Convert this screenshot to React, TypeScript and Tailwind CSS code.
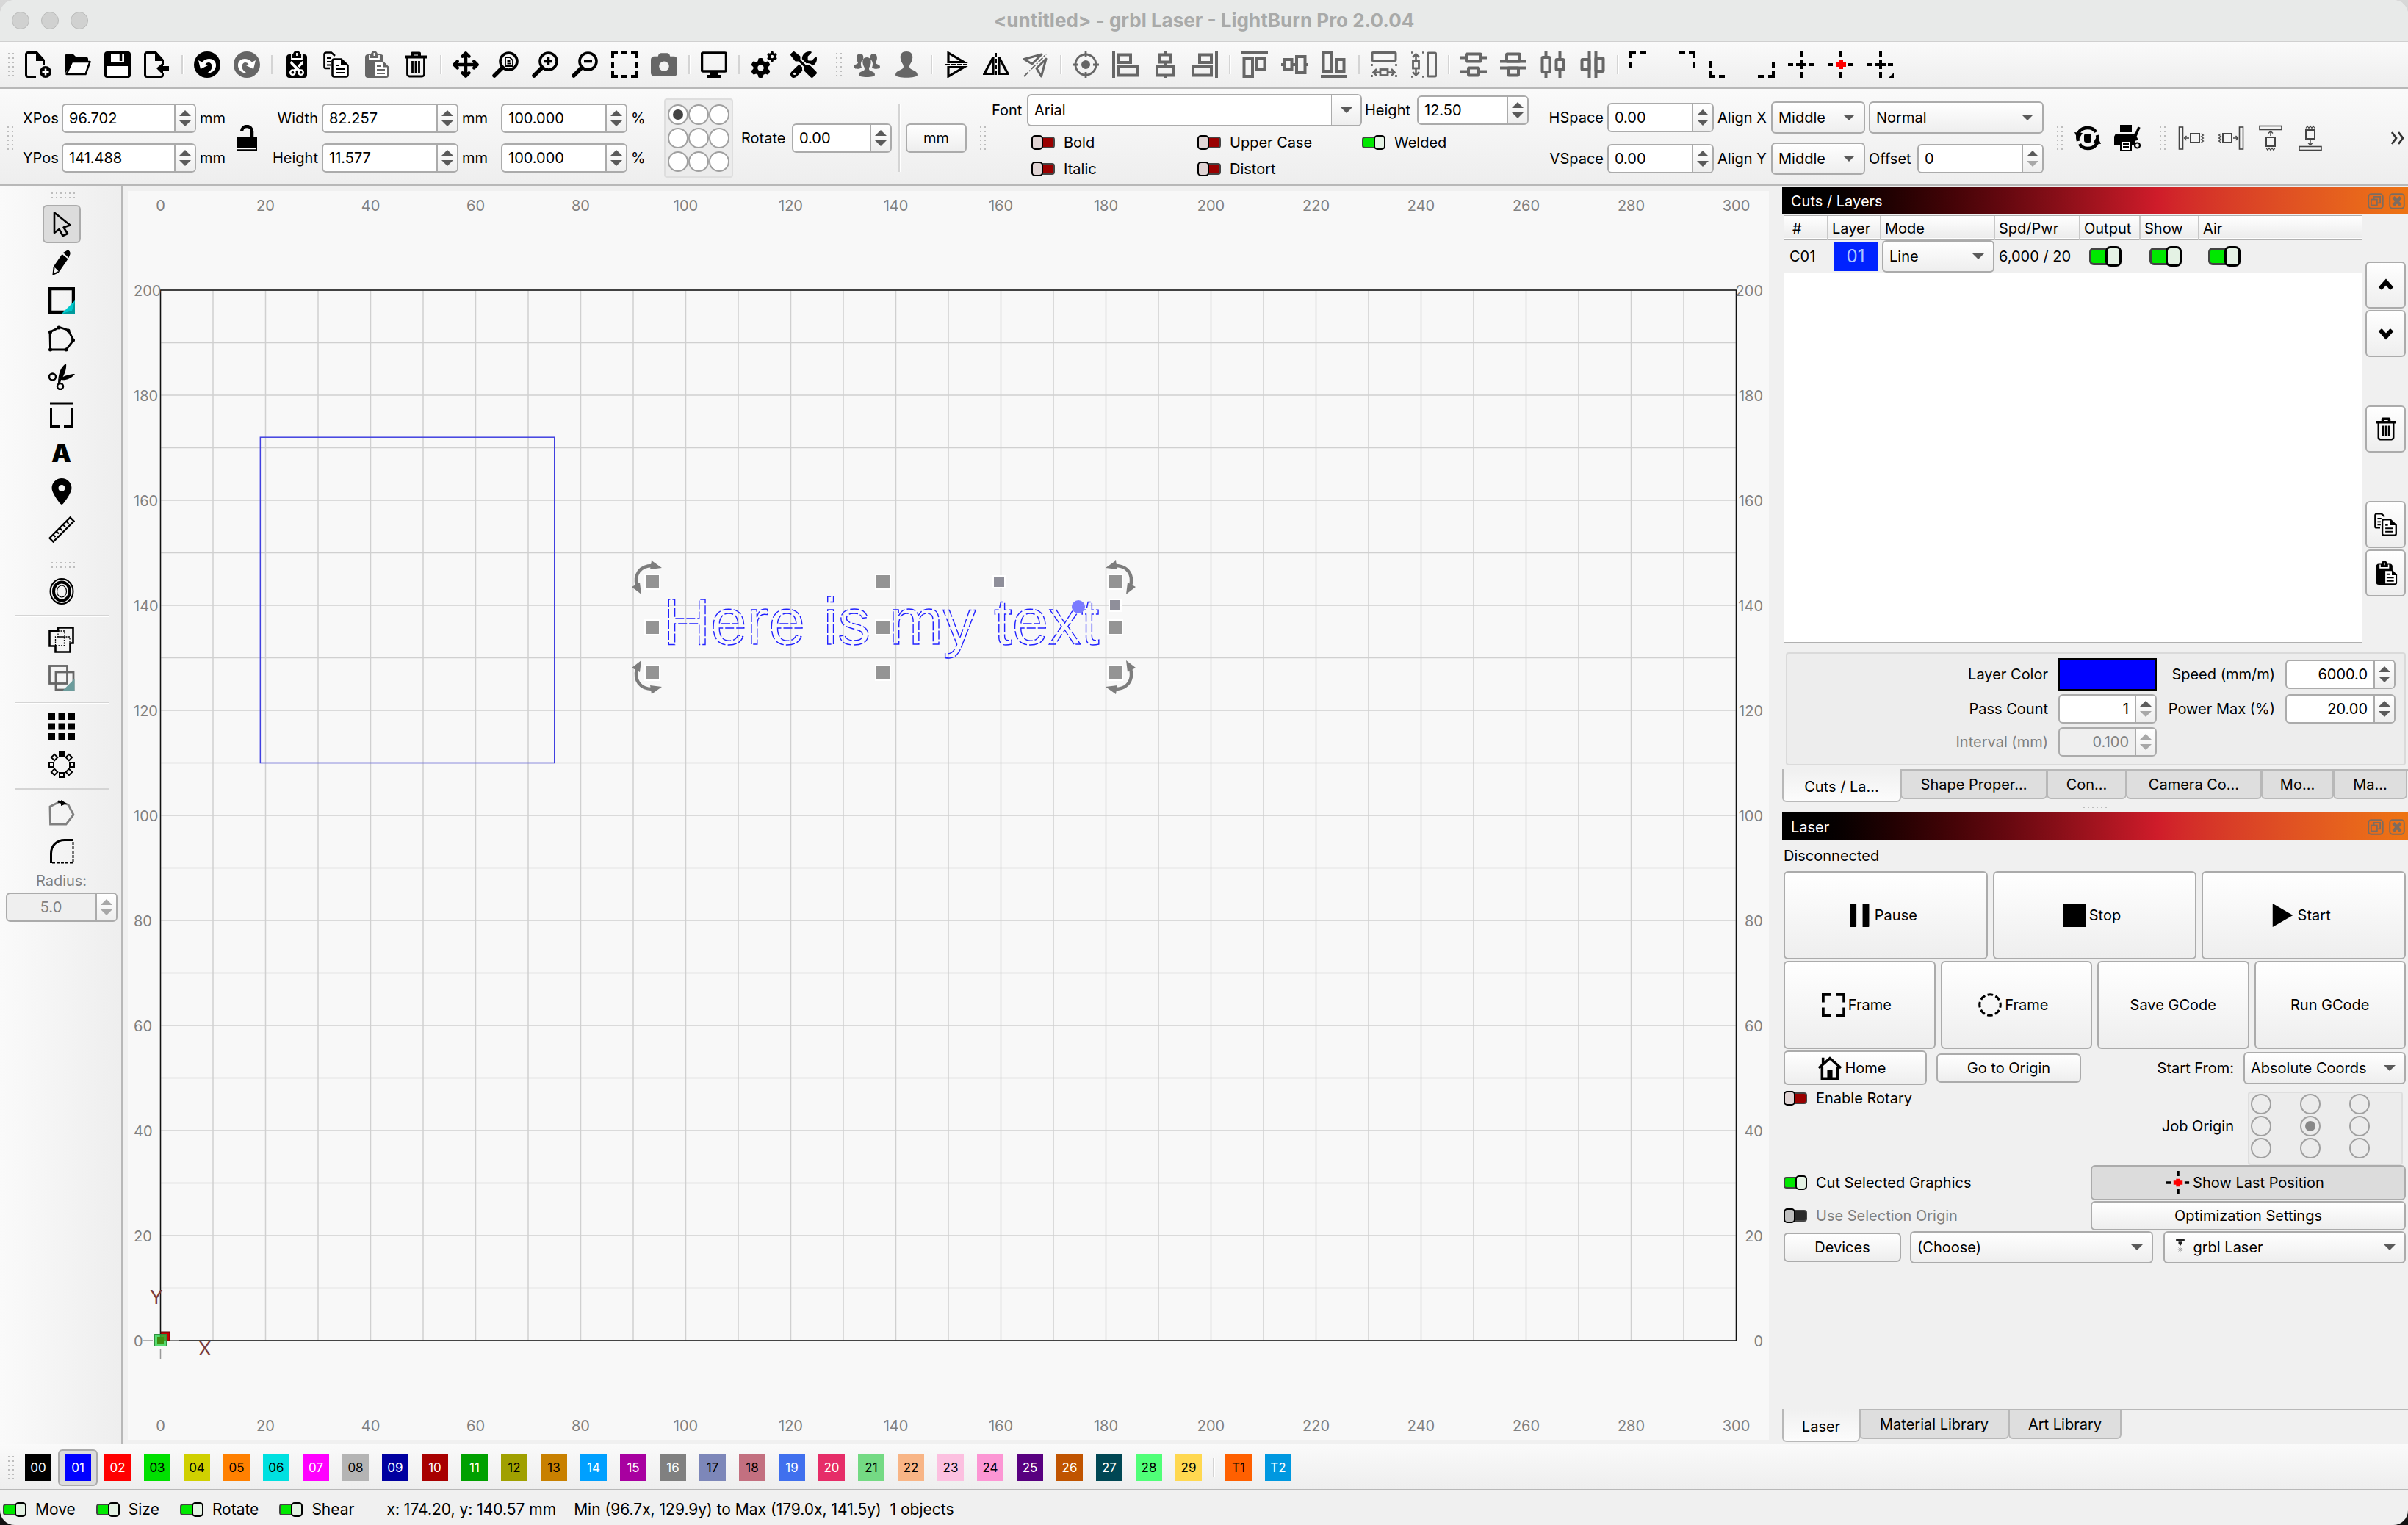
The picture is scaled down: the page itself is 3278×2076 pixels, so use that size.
import type { ReactNode } from "react";
import { clsx } from "clsx";
import {
  FaArrowsUpDownLeftRight,
  FaCamera,
  FaGear,
  FaLocationDot,
  FaScissors,
  FaScrewdriverWrench,
} from "react-icons/fa6";

const GREY = "#666666";

/* ---------- Icons ---------- */

function Icon({ children, color = "#000", size = 36 }: { children: ReactNode; color?: string; size?: number }) {
  return (
    <svg viewBox="0 0 36 36" width={size} height={size} fill="none" stroke="currentColor" color={color} strokeWidth={3} className="shrink-0" aria-hidden="true">
      {children}
    </svg>
  );
}

const Page = () => (
  <>
    <path d="M15 34.5H4a2.5 2.5 0 0 1-2.5-2.5V4A2.5 2.5 0 0 1 4 1.5H16L25.5 12V18" />
    <path d="M15 1h2l9.500 10.500V13H15z" fill="currentColor" stroke="none" />
  </>
);

const PageLines = () => (
  <>
    <path d="M9 23H3.5A2 2 0 0 1 1.5 21V4A2.5 2.5 0 0 1 4 1.5H11L16 6" strokeWidth={2.6} />
    <path d="M5 9h6M5 14h5M5 18.5h5" strokeWidth={2} />
    <path d="M15 10.5h9.5l9 8.5V32a2.5 2.5 0 0 1-2.5 2.5H15a2.5 2.5 0 0 1-2.5-2.5V13a2.5 2.5 0 0 1 2.5-2.5z" fill="#fff" strokeWidth={2.6} />
    <path d="M24 10v9h9z" fill="currentColor" stroke="none" />
    <path d="M17 19h4M17 24h12M17 29h12" strokeWidth={2.2} />
  </>
);

const Clipboard = () => (
  <>
    <path d="M7 4h4a4.5 4.5 0 0 1 9 0h4a4 4 0 0 1 4 4v6l-12 2v20H7a4 4 0 0 1-4-4V8a4 4 0 0 1 4-4z" fill="currentColor" stroke="none" />
    <path d="M9 5v5h13V5M15.500 2v4" stroke="#fff" strokeWidth={1.8} />
    <path d="M16 14h11l7 7v12a2 2 0 0 1-2 2H16z" fill="#fff" strokeWidth={2} />
    <path d="M27 13l8 8.500h-8z" fill="currentColor" stroke="none" />
    <path d="M19 20h5M19 25h11M19 30h11" strokeWidth={2.2} />
  </>
);

const TrashCan = () => (
  <>
    <path d="M3 7.5H33M13 6V2.5h10V6" strokeWidth={4} strokeLinejoin="round" />
    <path d="M6.5 8V31a3 3 0 0 0 3 3h17a3 3 0 0 0 3-3V8M13.500 13v16M18 13v16M22.500 13v16" strokeWidth={2.8} />
  </>
);

const Glass = () => (
  <>
    <circle cx="22.5" cy="13.5" r="11.5" strokeWidth={3.6} />
    <path d="M14 22L3 33" strokeWidth={5.5} strokeLinecap="round" />
  </>
);

const UndoShape = () => (
  <>
    <circle cx="18" cy="18" r="18" fill="currentColor" stroke="none" />
    <path d="M6 12L9 24L19 19L15.500 17.500C19 13 24 15 24.500 19.500C25 24 22 27.500 17 30C25 30 30.500 25 30 18C29.500 10 19 6.500 11 14.500Z" fill="#fff" stroke="none" />
  </>
);

const AlignEdge = () => (
  <>
    <path d="M2 0V36" strokeWidth={4} />
    <rect x="9" y="4.500" width="16" height="10.500" strokeWidth={4} />
    <rect x="9" y="21" width="25" height="11.500" strokeWidth={4} />
  </>
);

const AlignMiddle = () => (
  <>
    <path d="M18 0v3M18 14v7M18 33v3" strokeWidth={4} />
    <rect x="11" y="4.500" width="14" height="10" strokeWidth={4} />
    <rect x="7" y="21" width="22" height="11.500" strokeWidth={4} />
  </>
);

const SpreadShape = () => (
  <>
    <rect x="2" y="1.500" width="32" height="11" rx="1" strokeWidth={3} />
    <path d="M1.500 17v3M1.500 32v3M34.500 17v3M34.500 32v3" strokeWidth={2.5} />
    <path d="M4 28.500h8M24 28.500h8M8 24l-4.500 4.500L8 33M28 24l4.500 4.500L28 33" strokeWidth={2.5} />
    <rect x="13" y="24.500" width="10" height="8" strokeWidth={2.8} />
  </>
);

const DistributeCenters = () => (
  <>
    <path d="M0 8.500h7M29 8.500h7M0 27.500h9M27 27.500h9" strokeWidth={4} />
    <rect x="8" y="3.500" width="20" height="10" rx="1" strokeWidth={4} />
    <rect x="11" y="22.500" width="14" height="10" rx="1" strokeWidth={4} />
  </>
);

const DistributeEdges = () => (
  <>
    <path d="M0 13.500h36M0 22.500h36" strokeWidth={4} />
    <rect x="9" y="3.500" width="18" height="10" rx="1" strokeWidth={4} />
    <rect x="11" y="22.500" width="14" height="10" rx="1" strokeWidth={4} />
  </>
);

const CornerShape = () => <path d="M0 2h9M14 2h9M2 0v9M2 14v8" strokeWidth={4} />;

const CrossShape = ({ center = "currentColor" }: { center?: string }) => (
  <>
    <path d="M0 18h7M28 18h7M18 0v8M18 28v8" strokeWidth={4} />
    <path d="M11 18h14M18 12v12" stroke={center} strokeWidth={center === "currentColor" ? 4 : 6} />
  </>
);

const NudgeShape = () => (
  <>
    <rect x="1.500" y="3" width="5" height="30" strokeWidth={1.6} />
    <path d="M9 18h6M11.500 15L8.500 18l3 3" strokeWidth={1.4} />
    <rect x="17" y="12" width="12" height="12" strokeWidth={2} />
    <path d="M31.500 12l3 2-3 2 3 2-3 2 3 2-3 2" strokeWidth={1.2} />
  </>
);

type Item = { label: string; icon: ReactNode; active?: boolean } | "sep";

const fileTools: Item[] = [
  { label: "New", icon: <Icon><Page /><circle cx="28" cy="28" r="8" fill="currentColor" stroke="none" /><path d="M28 23.500v9M23.500 28h9" stroke="#fff" strokeWidth={2.5} /></Icon> },
  { label: "Open", icon: <Icon><path d="M0 31V6a2 2 0 0 1 2-2h10l4 4h14a2 2 0 0 1 2 2v5H11z" fill="currentColor" stroke="none" /><path d="M10 14H34.500L28.500 31H2.500z" fill="#fff" strokeLinejoin="round" strokeWidth={2.5} /></Icon> },
  { label: "Save", icon: <Icon><rect width="36" height="36" rx="4" fill="currentColor" stroke="none" /><path d="M9 3h18v11H9zM4 20h28v13H4z" fill="#fff" stroke="none" /><path d="M22.500 4v9" strokeWidth={3.5} /></Icon> },
  { label: "Export", icon: <Icon><Page /><path d="M14 34.500H23a2.5 2.5 0 0 0 2.5-2.5V30" /><path d="M17 23l9-8v5h8v7h-8v5z" fill="currentColor" stroke="none" /></Icon> },
  "sep",
  { label: "Undo", icon: <Icon><UndoShape /></Icon> },
  { label: "Redo", icon: <Icon color={GREY}><g transform="matrix(-1 0 0 1 36 0)"><UndoShape /></g></Icon> },
  "sep",
  { label: "Cut", icon: <Icon><path d="M8 4h5a5 5 0 0 1 10 0h5a4 4 0 0 1 4 4v24a4 4 0 0 1-4 4H8a4 4 0 0 1-4-4V8a4 4 0 0 1 4-4z" fill="currentColor" stroke="none" /><path d="M11 4v6h14V4M18 2v4" stroke="#fff" strokeWidth={1.8} /><g transform="rotate(-90 18 23)"><FaScissors x={8} y={13} size={20} color="#fff" /></g></Icon> },
  { label: "Copy", icon: <Icon><PageLines /></Icon> },
  { label: "Paste", icon: <Icon color={GREY}><Clipboard /></Icon> },
  { label: "Delete", icon: <Icon><TrashCan /></Icon> },
  "sep",
  { label: "Pan", icon: <FaArrowsUpDownLeftRight size={36} /> },
  { label: "Zoom to page", icon: <Icon><Glass /><path d="M18 8h6l4 4v8H18zM20.500 13h4M20.500 16.500h5" strokeWidth={1.8} /></Icon> },
  { label: "Zoom in", icon: <Icon><Glass /><path d="M22.500 8v11M17 13.500h11" strokeWidth={3.5} /></Icon> },
  { label: "Zoom out", icon: <Icon><Glass /><path d="M17 13.500h11" strokeWidth={3.5} /></Icon> },
  { label: "Frame selection", icon: <Icon><path d="M2 9V2h7M27 2h7v7M34 27v7h-7M9 34H2v-7M14 2h8M14 34h8M2 14v8M34 14v8" strokeWidth={4} /></Icon> },
  { label: "Capture", icon: <FaCamera size={36} color={GREY} /> },
  "sep",
  { label: "Preview", icon: <Icon><rect x="1.500" y="2" width="33" height="25" rx="1.500" strokeWidth={3.5} /><path d="M12 27h12v5h4v4H8v-4h4z" fill="currentColor" stroke="none" /></Icon> },
  "sep",
  { label: "Settings", icon: <Icon><FaGear x={0} y={9} size={27} /><FaGear x={22} y={0} size={14} /></Icon> },
  { label: "Device settings", icon: <FaScrewdriverWrench size={36} /> },
];

const arrangeTools: Item[] = [
  { label: "Group", icon: <Icon color={GREY}><g fill="currentColor" stroke="none"><path d="M9 3c4 0 5 4 4 8-3 2-4 6-2 11-3 3-11 2-11-1 0-4 6-3 6-6C3 11 3 3 9 3zM27 3c-4 0-5 4-4 8 3 2 4 6 2 11 3 3 11 2 11-1 0-4-6-3-6-6 3-4 3-12-3-12z" /><path d="M18 8c5 0 6 4 5.500 8-.5 4-2.500 5-2.500 8 0 4 8 2 8 8 0 4-22 4-22 0 0-6 8-4 8-8 0-3-2-4-2.500-8C12 12 13 8 18 8z" /></g></Icon> },
  { label: "Ungroup", icon: <Icon color={GREY}><path d="M18 0c7 0 9 5 8 10-.5 5-4 7-4 11 0 5 11 4 11 11 0 5-30 5-30 0 0-7 11-6 11-11 0-4-3.500-6-4-11C9 5 11 0 18 0z" fill="currentColor" stroke="none" /></Icon> },
  "sep",
  { label: "Flip vertical", icon: <Icon><path d="M7 2V14.500H28zM7 34V21.500H28z" strokeWidth={3.2} /><path d="M3 18h30" strokeWidth={2} strokeDasharray="6 2" /></Icon> },
  { label: "Flip horizontal", icon: <Icon><path d="M2 30.500H14V8zM34 30.500H22V8z" strokeWidth={3.2} /><path d="M18 2v32" strokeWidth={2} strokeDasharray="6 2" /></Icon> },
  { label: "Mirror", icon: <Icon color={GREY}><path d="M2 10.500L26 4L13 17zM32 10L25.500 34L19 23z" strokeWidth={3} strokeLinejoin="round" /><path d="M2 34L32 4" strokeWidth={1.8} strokeDasharray="8 2 2 2" /></Icon> },
  "sep",
  { label: "Center on page", icon: <Icon color={GREY}><circle cx="18" cy="18" r="14" strokeWidth={2.8} /><circle cx="18" cy="18" r="6" fill="currentColor" stroke="none" /><path d="M18 0v8M18 28v8M0 18h8M28 18h8" strokeWidth={2.8} /></Icon> },
  { label: "Align left", icon: <Icon color={GREY}><AlignEdge /></Icon> },
  { label: "Align centers", icon: <Icon color={GREY}><AlignMiddle /></Icon> },
  { label: "Align right", icon: <Icon color={GREY}><g transform="matrix(-1 0 0 1 36 0)"><AlignEdge /></g></Icon> },
  "sep",
  { label: "Align top", icon: <Icon color={GREY}><g transform="rotate(90 18 18)"><AlignEdge /></g></Icon> },
  { label: "Align middle", icon: <Icon color={GREY}><g transform="rotate(-90 18 18)"><AlignMiddle /></g></Icon> },
  { label: "Align bottom", icon: <Icon color={GREY}><g transform="rotate(90 18 18) matrix(-1 0 0 1 36 0)"><AlignEdge /></g></Icon> },
  "sep",
  { label: "Make same width", icon: <Icon color={GREY}><SpreadShape /></Icon> },
  { label: "Make same height", icon: <Icon color={GREY}><g transform="rotate(90 18 18)"><SpreadShape /></g></Icon> },
  "sep",
  { label: "Distribute vertical centers", icon: <Icon color={GREY}><DistributeCenters /></Icon> },
  { label: "Distribute vertical", icon: <Icon color={GREY}><DistributeEdges /></Icon> },
  { label: "Distribute horizontal centers", icon: <Icon color={GREY}><g transform="rotate(90 18 18) matrix(1 0 0 -1 0 36)"><DistributeCenters /></g></Icon> },
  { label: "Distribute horizontal", icon: <Icon color={GREY}><g transform="rotate(90 18 18)"><DistributeEdges /></g></Icon> },
  "sep",
  { label: "Move to upper left", icon: <Icon><CornerShape /></Icon> },
  { label: "Move to upper right", icon: <Icon><g transform="rotate(90 18 18)"><CornerShape /></g></Icon> },
  { label: "Move to lower left", icon: <Icon><g transform="rotate(-90 18 18)"><CornerShape /></g></Icon> },
  { label: "Move to lower right", icon: <Icon><g transform="rotate(180 18 18)"><CornerShape /></g></Icon> },
  { label: "Move to center", icon: <Icon><CrossShape /></Icon> },
  { label: "Move to laser", icon: <Icon><CrossShape center="#ff0000" /></Icon> },
  { label: "Move laser to", icon: <Icon><CrossShape /><path d="M36 29v7h-7z" fill="currentColor" stroke="none" /></Icon> },
];

const polygonPath = "M2 9L15 2.500L27 6.500L34 20L24 33H2.500z";

const drawTools: Item[] = [
  { label: "Select", active: true, icon: <Icon><path d="M8 2.500V30L14.500 25L19.500 34L26 31L20.500 22.500L29.500 19.500z" strokeWidth={2.6} strokeLinejoin="round" /></Icon> },
  { label: "Draw lines", icon: <Icon><path d="M20 5L26 1.500Q30 2 29.500 7L27.500 12zM18.500 7L26.500 13.500L14.500 31L7 23.500z" fill="currentColor" stroke="none" /><path d="M7.500 25L6.500 34.500L14 31" strokeWidth={2} /></Icon> },
  { label: "Rectangle", icon: <Icon><rect x="2" y="2" width="32" height="32" strokeWidth={4.5} /><path d="M36 18V36H18z" fill="#00c8cc" stroke="none" /><path d="M36 18V36H18L32 32z" fill="#009a9c" stroke="none" /></Icon> },
  { label: "Polygon", icon: <Icon><path d={polygonPath} strokeWidth={2.8} /><g fill="currentColor" stroke="none"><circle cx="2.500" cy="9" r="2.500" /><circle cx="14" cy="3" r="2.500" /><circle cx="27" cy="7" r="2.500" /><circle cx="33.500" cy="20" r="2.500" /><circle cx="24" cy="33" r="2.500" /><circle cx="2.500" cy="33" r="2.500" /></g></Icon> },
  { label: "Cut shapes", icon: <Icon><circle cx="5.500" cy="18" r="4.500" strokeWidth={2.5} /><circle cx="16" cy="31" r="4" strokeWidth={2.5} /><path d="M13 27C13 14 17 4 24 0C25 8 21 17 17 22L16 27zM10 18L15 21C22 16 30 14 36 14C31 21 23 23 17 22z" fill="currentColor" stroke="none" /></Icon> },
  { label: "Add tabs", icon: <Icon><path d="M2 2H34M3.500 9V33.500H15M21 33.500H32.500V9" strokeWidth={3} /></Icon> },
  { label: "Text", icon: <span className="text-[34px] leading-[36px] font-black">A</span> },
  { label: "Position laser", icon: <FaLocationDot size={36} /> },
  { label: "Measure", icon: <Icon><path d="M1.500 29.500L29.500 1.500L34.500 6.500L6.500 34.500z" strokeWidth={2.4} /><path d="M6.500 25l3 3M11 20.500l3 3M15.500 16l3 3M20 11.500l3 3M24.500 7l3 3" strokeWidth={2} /></Icon> },
];

const offsetTools: Item[] = [
  { label: "Offset shapes", icon: <Icon><ellipse cx="18" cy="18" rx="15.500" ry="17" strokeWidth={2} /><ellipse cx="18" cy="18" rx="11" ry="12.500" strokeWidth={4} /><ellipse cx="18" cy="18" rx="6.500" ry="8" strokeWidth={1.2} /></Icon> },
  "sep",
  { label: "Weld", icon: <Icon><path d="M1.500 6H13V1.500H33.500V22.500H29.500V34.500H9.500V26.500H1.500z" strokeWidth={2.6} /><path d="M13 6v8M13 14h16v9M9.500 26V14h12v12H10M13 6h9v8" strokeWidth={1.3} strokeDasharray="2 1.500" /></Icon> },
  { label: "Boolean", icon: <Icon color={GREY}><rect x="1.500" y="1.500" width="24" height="24" strokeWidth={2.8} /><rect x="10" y="10" width="24" height="24" strokeWidth={2.8} /><path d="M35.500 19V35.500H19z" fill="#6c9c9c" stroke="none" /></Icon> },
  "sep",
  { label: "Grid array", icon: <Icon><g fill="currentColor" stroke="none">{[0, 13.5, 27].map((y) => [0, 13.5, 27].map((x) => <rect key={`${x}-${y}`} x={x} y={y} width="9" height="9" />))}</g></Icon> },
  { label: "Circular array", icon: <Icon>{[0, 45, 90, 135, 180, 225, 270, 315].map((a) => <rect key={a} x="15" y="1" width="6" height="6" transform={`rotate(${a} 18 18)`} strokeWidth={2} fill={a === 0 ? "currentColor" : "none"} />)}</Icon> },
  "sep",
  { label: "Start point", icon: <Icon color="#808080"><path d={polygonPath} strokeWidth={2.8} /><path d="M13 2l7 2" stroke="#000" strokeWidth={3} /><path d="M17 0l8 5-8 3z" fill="#000" stroke="none" /></Icon> },
  { label: "Round corners", icon: <Icon><path d="M3.500 34V21C3.500 10 11 2.500 22 2.500H34" strokeWidth={3} /><path d="M33.500 5V33M33 33.500H4" strokeWidth={2} strokeDasharray="4 2" /></Icon> },
];

/* ---------- Controls ---------- */

function Grip({ horizontal }: { horizontal?: boolean }) {
  const dots = Array.from({ length: 12 }, (_, i) => ({ a: (i % 2) * 6, b: Math.floor(i / 2) * 6 }));
  return (
    <svg width={horizontal ? 32 : 8} height={horizontal ? 8 : 32} fill="#bdbdbd" className="shrink-0" aria-hidden="true">
      {dots.map(({ a, b }) => (
        <rect key={`${a}-${b}`} x={horizontal ? b : a} y={horizontal ? a : b} width="2" height="2" />
      ))}
    </svg>
  );
}

const Caret = ({ up, faded }: { up?: boolean; faded?: boolean }) => (
  <svg viewBox="0 0 16 8" width="16" height="8" fill={faded ? "#a8a8a8" : "#5a5a5a"} aria-hidden="true">
    <path d={up ? "M0 8L8 0L16 8z" : "M0 0L8 8L16 0z"} />
  </svg>
);

type SpinProps = { id: string; value: string; label?: string; align?: string; disabled?: boolean; atMin?: boolean; className?: string };

function Spin({ id, value, label, align, disabled, atMin, className }: SpinProps) {
  return (
    <div className={clsx("flex h-10 min-w-0 overflow-hidden rounded-md border-2 border-[#ababab]", disabled ? "bg-[#efefef]" : "bg-white", className)}>
      <input
        id={id}
        type="text"
        aria-label={label}
        defaultValue={value}
        disabled={disabled}
        className={clsx("w-0 min-w-0 flex-1 bg-transparent px-2 outline-none", align ?? "text-left", disabled ? "text-[#808080]" : "text-black")}
      />
      <div className="flex w-7 flex-col items-center justify-center gap-[6px] border-l-2 border-[#ababab] bg-linear-to-b from-white to-[#eeeeee]">
        <button type="button" aria-label="Increase" disabled={disabled}><Caret up faded={disabled} /></button>
        <button type="button" aria-label="Decrease" disabled={disabled}><Caret faded={disabled || atMin} /></button>
      </div>
    </div>
  );
}

type PickProps = { id: string; value: string; label?: string; className?: string; pad?: string };

function Pick({ id, value, label, className, pad = "pl-2" }: PickProps) {
  return (
    <div className={clsx("relative", className)}>
      <select
        id={id}
        aria-label={label}
        className={clsx("h-full w-full appearance-none rounded-md border-2 border-[#ababab] bg-linear-to-b from-white to-[#eeeeee] outline-none", pad)}
      >
        <option>{value}</option>
      </select>
      <span className="pointer-events-none absolute inset-y-0 right-[14px] flex items-center"><Caret /></span>
    </div>
  );
}

const buttonFace = "flex items-center justify-center rounded-md border-2 border-[#ababab] bg-linear-to-b from-white to-[#eeeeee]";
const iconButton = "gap-1 pr-2";

type SwitchProps = { label: string; on?: boolean; disabled?: boolean; className?: string };

function Switch({ label, on, disabled, className }: SwitchProps) {
  return (
    <label className={clsx("flex items-center gap-3", disabled && "text-[#808080]", className)}>
      <input
        type="checkbox"
        defaultChecked={on}
        disabled={disabled}
        className="relative h-5 w-8 shrink-0 appearance-none before:absolute before:inset-x-0 before:inset-y-[2px] before:rounded-[4px] before:border-2 before:border-[#444444] before:bg-[#990000] after:absolute after:inset-y-0 after:left-0 after:w-4 after:rounded-[5px] after:border-2 after:border-black after:bg-[#e0d4d4] checked:before:bg-[#00e800] checked:after:right-0 checked:after:left-auto checked:after:bg-[#e4f2e4] disabled:before:bg-[#2a2a2a] disabled:after:bg-[#bfbfbf]"
      />
      {label}
    </label>
  );
}

function TableSwitch({ label }: { label: string }) {
  return (
    <input
      type="checkbox"
      aria-label={label}
      defaultChecked
      className="relative block h-7 w-11 appearance-none before:absolute before:inset-x-0 before:inset-y-[2px] before:rounded-[6px] before:border-[3px] before:border-[#444444] before:bg-[#00e800] after:absolute after:inset-y-0 after:right-0 after:w-[22px] after:rounded-[7px] after:border-[3px] after:border-black after:bg-[#e4f2e4]"
    />
  );
}

function OriginRadio({ name, index, checked, muted }: { name: string; index: number; checked: boolean; muted?: boolean }) {
  return (
    <input
      type="radio"
      name={name}
      aria-label={`${name} ${index + 1}`}
      defaultChecked={checked}
      className={clsx(
        "relative size-7 appearance-none rounded-full border-2 border-[#a0a0a0] checked:before:absolute checked:before:inset-[5px] checked:before:rounded-full",
        muted ? "checked:before:bg-[#888888]" : "bg-white checked:before:bg-[#444444]",
      )}
    />
  );
}

const Separator = () => <span className="flex w-[14px] shrink-0 justify-center"><span className="h-[26px] w-[3px] border-r border-white bg-[#d4d4d4]" /></span>;

function ToolRow({ items }: { items: Item[] }) {
  return (
    <>
      {items.map((item, i) =>
        item === "sep" ? (
          <Separator key={i} />
        ) : (
          <button key={item.label} type="button" aria-label={item.label} className="flex w-[54px] shrink-0 justify-center">
            {item.icon}
          </button>
        ),
      )}
    </>
  );
}

function ToolColumn({ items }: { items: Item[] }) {
  return (
    <>
      {items.map((item, i) =>
        item === "sep" ? (
          <span key={i} className="flex h-[14px] w-32 items-center"><span className="h-[3px] w-full border-b border-white bg-[#d4d4d4]" /></span>
        ) : (
          <button
            key={item.label}
            type="button"
            aria-label={item.label}
            className={clsx("flex h-[52px] w-[52px] items-center justify-center", item.active && "rounded-md border-2 border-[#ababab] bg-[#dcdcdc]")}
          >
            {item.icon}
          </button>
        ),
      )}
    </>
  );
}

/* ---------- Property bar ---------- */

function PropertyBar() {
  return (
    <div className="flex h-[132px] shrink-0 items-center border-b-2 border-[#b8b8b8] bg-linear-to-b from-[#fafafa] to-[#eeeeee] pt-1">
      <div className="flex w-[31px] shrink-0 pl-[10px]"><Grip /></div>
      <div className="grid shrink-0 grid-cols-[48px_183px_35px] items-center gap-x-[5px] gap-y-[14px]">
        <label htmlFor="xpos" className="text-right">XPos</label>
        <Spin id="xpos" value="96.702" />
        <span>mm</span>
        <label htmlFor="ypos" className="text-right">YPos</label>
        <Spin id="ypos" value="141.488" />
        <span>mm</span>
      </div>
      <button type="button" aria-label="Lock aspect ratio" className="ml-[11px] shrink-0">
        <Icon>
          <path d="M4 16h28v20H4z" fill="currentColor" stroke="none" />
          <path d="M5 32.500h26" stroke="#fff" strokeWidth={1.5} />
          <path d="M11 9c0-4 3-7 7-7s7 3 7 7v8" strokeWidth={4.5} />
        </Icon>
      </button>
      <div className="ml-[15px] grid shrink-0 grid-cols-[64px_186px_34px] items-center gap-x-[5px] gap-y-[14px]">
        <label htmlFor="width" className="text-right">Width</label>
        <Spin id="width" value="82.257" />
        <span>mm</span>
        <label htmlFor="height" className="text-right">Height</label>
        <Spin id="height" value="11.577" />
        <span>mm</span>
      </div>
      <div className="ml-[19px] grid shrink-0 grid-cols-[172px_18px] items-center gap-x-[5px] gap-y-[14px]">
        <Spin id="width-pct" label="Width percent" value="100.000" />
        <span>%</span>
        <Spin id="height-pct" label="Height percent" value="100.000" />
        <span>%</span>
      </div>
      <div className="ml-[27px] grid h-[108px] w-[94px] shrink-0 grid-cols-3 place-items-center content-center gap-y-1 rounded-sm border-2 border-[#dedede] bg-[#ececec] px-[3px]">
        {Array.from({ length: 9 }, (_, i) => <OriginRadio key={i} name="anchor" index={i} checked={i === 0} />)}
      </div>
      <label htmlFor="rotate" className="ml-[11px] w-16 shrink-0">Rotate</label>
      <Spin id="rotate" value="0.00" className="ml-[5px] w-[136px] shrink-0" />
      <span className="ml-[9px] h-[92px] w-[3px] shrink-0 border-r border-white bg-[#d4d4d4]" />
      <button type="button" className={clsx(buttonFace, "ml-[7px] h-10 w-[83px] shrink-0")}>mm</button>

      <div className="ml-[18px] flex w-4 shrink-0"><Grip /></div>
      <div className="shrink-0">
        <div className="flex items-center">
          <label htmlFor="font" className="w-12">Font</label>
          <div className="relative h-11 w-[456px]">
            <select id="font" className="h-full w-full appearance-none rounded-md border-2 border-[#ababab] bg-white pl-2 outline-none">
              <option>Arial</option>
            </select>
            <span className="pointer-events-none absolute inset-y-[2px] right-[2px] flex w-10 items-center justify-center rounded-r border-l border-[#ababab] bg-linear-to-b from-white to-[#eeeeee]"><Caret /></span>
          </div>
          <label htmlFor="text-height" className="w-[75px] pl-1">Height</label>
          <Spin id="text-height" value="12.50" className="w-[152px]" />
        </div>
        <div className="mt-1 grid auto-rows-[36px] grid-cols-[226px_224px_1fr] items-center pl-[54px]">
          <Switch label="Bold" />
          <Switch label="Upper Case" />
          <Switch label="Welded" on />
          <Switch label="Italic" />
          <Switch label="Distort" />
        </div>
      </div>
      <div className="ml-[27px] grid shrink-0 auto-rows-[44px] grid-cols-[75px_145px_68px_128px_auto] items-center gap-x-[5px] gap-y-3">
        <label htmlFor="hspace" className="text-right">HSpace</label>
        <Spin id="hspace" value="0.00" />
        <label htmlFor="align-x">Align X</label>
        <Pick id="align-x" value="Middle" className="h-11" />
        <Pick id="text-mode" label="Text mode" value="Normal" className="h-11 w-[238px]" />
        <label htmlFor="vspace" className="text-right">VSpace</label>
        <Spin id="vspace" value="0.00" />
        <label htmlFor="align-y">Align Y</label>
        <Pick id="align-y" value="Middle" className="h-11" />
        <div className="flex items-center gap-[5px]">
          <label htmlFor="offset" className="w-[61px]">Offset</label>
          <Spin id="offset" value="0" atMin className="flex-1" />
        </div>
      </div>

      <div className="ml-[18px] flex w-6 shrink-0"><Grip /></div>
      <div className="flex shrink-0 gap-[18px]">
        <button type="button" aria-label="Variable text">
          <Icon>
            <path d="M5 22C2 10 9 4 18 4c5 0 9 2 11 6M31 14C34 26 27 32 18 32c-5 0-9-2-11-6" strokeWidth={4.5} />
            <path d="M0 10l11 1-6 10zM36 26l-11-1 6-10z" fill="currentColor" stroke="none" />
            <rect x="13" y="12" width="10" height="12" rx="3" fill="currentColor" stroke="none" />
          </Icon>
        </button>
        <button type="button" aria-label="Print and cut">
          <Icon>
            <path d="M8 0h16v10H8zM2 12h22l4 4v12H0V16z" fill="currentColor" stroke="none" />
            <path d="M9 22h14v13H9z" fill="#fff" strokeWidth={2} />
            <path d="M12 26h8M12 30h8" strokeWidth={1.8} />
            <path d="M34 3L27 20M27 12l4 9" strokeWidth={3.5} />
            <circle cx="31.500" cy="28" r="3.500" strokeWidth={2.2} />
          </Icon>
        </button>
      </div>
      <div className="ml-[26px] flex w-[25px] shrink-0"><Grip /></div>
      <div className="flex shrink-0 gap-[18px]">
        {[
          { label: "Dock left", turn: 0 },
          { label: "Dock right", turn: 180 },
          { label: "Dock up", turn: 90 },
          { label: "Dock down", turn: 270 },
        ].map(({ label, turn }) => (
          <button key={label} type="button" aria-label={label}>
            <Icon color="#444444"><g transform={`rotate(${turn} 18 18)`}><NudgeShape /></g></Icon>
          </button>
        ))}
      </div>
      <button type="button" aria-label="More tools" className="mr-[6px] ml-auto shrink-0">
        <svg viewBox="0 0 18 18" width="18" height="18" fill="none" stroke="#333" strokeWidth={2.8} aria-hidden="true"><path d="M2 1l6 8-6 8M11 1l6 8-6 8" /></svg>
      </button>
    </div>
  );
}

/* ---------- Workspace ---------- */

// 1 mm = 7.15 units, bed origin at the lower left
const MM = 7.15;
const OX = 44.5;
const OY = 1565;
const px = (mm: number) => OX + mm * MM;
const py = (mm: number) => OY - mm * MM;
const range = (n: number, step: number) => Array.from({ length: n + 1 }, (_, i) => i * step);

const handles = [
  [714, 532], [1028, 532], [1344, 532],
  [714, 594], [1028, 594], [1344, 594],
  [714, 656], [1028, 656], [1344, 656],
];

const RotateArrow = () => (
  <g fill="#7d7d7d">
    <path d="M693 538C689 522 697 510 714 510" fill="none" stroke="#7d7d7d" strokeWidth={4.5} />
    <path d="M713 503L727 513L711 515zM686 539L699 549L697 533z" />
  </g>
);

function Workspace() {
  return (
    <div className="min-w-0 flex-1 bg-[#f0f0f0] pt-[7px] pr-[18px] pb-[6px] pl-[7px]">
      <svg viewBox="0 0 2234 1700" className="block h-full w-full bg-[#f8f8f8] text-[20px]" role="img" aria-label="Workspace">
        <g stroke="#d0d0d0" strokeWidth={1.5}>
          {range(30, 10).map((x) => <path key={x} d={`M${px(x)} ${py(0)}V${py(200)}`} />)}
          {range(20, 10).map((y) => <path key={y} d={`M${px(0)} ${py(y)}H${px(300)}`} />)}
        </g>
        <rect x={px(0)} y={py(200)} width={300 * MM} height={200 * MM} fill="none" stroke="#111" strokeWidth={1.5} />

        <g fill="#808080">
          {range(15, 20).map((x) => (
            <g key={x} textAnchor="middle">
              <text x={px(x)} y={27}>{x}</text>
              <text x={px(x)} y={1688}>{x}</text>
            </g>
          ))}
          {range(10, 20).map((y) => (
            <g key={y}>
              <text x={8} y={py(y) + 8}>{y}</text>
              <text x={2226} y={py(y) + 8} textAnchor="end">{y}</text>
            </g>
          ))}
        </g>

        {/* Bed origin */}
        <path d="M20 1565H34M58 1565H70M44.500 1576V1590" stroke="#999" strokeWidth={1.5} />
        <rect x="45" y="1553" width="12" height="12" fill="#cc0000" stroke="#551111" />
        <rect x="36.500" y="1556.500" width="16" height="16" fill="#20d040" fillOpacity={0.75} stroke="#2f8f3f" />
        <rect x="40" y="1560" width="9" height="9" fill="#3f8f10" />
        <g fill="#7a3a3a" className="text-[26px]">
          <text x="30" y="1515">Y</text>
          <text x="96" y="1585">X</text>
        </g>

        <rect x={px(19)} y={py(172)} width={56 * MM} height={62 * MM} fill="none" stroke="#4040e0" strokeWidth={1.5} />

        {/* Selected text */}
        <text x="729" y="617" fill="none" stroke="#2222ff" strokeWidth={1.4} strokeDasharray="12 3" className="font-['Liberation_Sans',sans-serif] text-[89px]">
          Here is my text
        </text>
        <g fill="#949494" stroke="#fff" strokeWidth={2}>
          {handles.map(([x, y]) => <rect key={`${x}-${y}`} x={x - 10} y={y - 10} width="20" height="20" />)}
          <rect x="1178" y="524" width="16" height="16" fill="#8f8f9a" />
          <rect x="1336" y="556" width="16" height="16" fill="#8f8f9a" />
        </g>
        <circle cx="1294" cy="566" r="9" fill="#7b7bff" />
        <RotateArrow />
        <g transform="matrix(-1 0 0 1 2058 0)"><RotateArrow /></g>
        <g transform="matrix(1 0 0 -1 0 1188)"><RotateArrow /></g>
        <g transform="matrix(-1 0 0 -1 2058 1188)"><RotateArrow /></g>
      </svg>
    </div>
  );
}

/* ---------- Docked panels ---------- */

function DockTitle({ title }: { title: string }) {
  return (
    <div className="flex h-[38px] shrink-0 items-center bg-linear-to-r from-black via-[#cf1c2a] via-60% to-[#ee7412] pt-[2px] pr-1 pl-3 text-white">
      <h2>{title}</h2>
      <div className="ml-auto flex gap-[7px]">
        <button type="button" aria-label={`Float ${title}`}>
          <Icon size={22} color="#7c6c60"><rect x="2" y="2" width="32" height="32" rx="6" /><rect x="8" y="14" width="13" height="13" /><path d="M14 13V8h14v14h-6" /></Icon>
        </button>
        <button type="button" aria-label={`Close ${title}`}>
          <Icon size={22} color="#7c6c60"><rect x="2" y="2" width="32" height="32" rx="6" /><path d="M10 9l16 18M26 9L10 27" strokeWidth={7} /></Icon>
        </button>
      </div>
    </div>
  );
}

function DockTabs({ tabs }: { tabs: { name: string; width: string }[] }) {
  return (
    <div className="flex h-[45px] shrink-0 items-start" role="tablist">
      {tabs.map(({ name, width }, i) => (
        <button
          key={name}
          type="button"
          role="tab"
          aria-selected={i === 0}
          className={clsx(
            "shrink-0 rounded-b-md border-2 border-[#b8b8b8]",
            width,
            i === 0 ? "h-[45px] border-t-0 bg-linear-to-b from-[#f0f0f0] to-[#fcfcfc] pt-1" : "-ml-px h-[41px] bg-[#dedede]",
          )}
        >
          {name}
        </button>
      ))}
      <span className="h-[2px] flex-1 bg-[#b8b8b8]" />
    </div>
  );
}

const columns = ["#", "Layer", "Mode", "Spd/Pwr", "Output", "Show", "Air"];

function CutsPanel() {
  return (
    <section className="shrink-0">
      <DockTitle title="Cuts / Layers" />
      <div className="mt-px flex gap-1 pr-[3px] pl-[2px]">
        <div className="h-[582px] min-w-0 flex-1 border border-[#b0b0b0] bg-white">
          <table className="w-full table-fixed border-collapse">
            <colgroup>
              <col className="w-[59px]" />
              <col className="w-[72px]" />
              <col className="w-[155px]" />
              <col className="w-[116px]" />
              <col className="w-[82px]" />
              <col className="w-20" />
              <col />
            </colgroup>
            <thead>
              <tr className="h-8 border-b-2 border-[#b0b0b0] bg-linear-to-b from-white to-[#ececec]">
                {columns.map((name, i) => (
                  <th key={name} className={clsx("pt-[2px] text-left font-normal", i === 0 ? "pl-[11px]" : "pl-[5px]", i < 6 && "border-r-2 border-[#c8c8c8]")}>{name}</th>
                ))}
              </tr>
            </thead>
            <tbody>
              <tr className="h-11 bg-[#f0f0f0]">
                <td className="pl-[7px]">C01</td>
                <td className="pl-2"><div className="flex h-10 w-[60px] items-center justify-center bg-[#0022ff] text-[24px] text-[#aac4ff]">01</div></td>
                <td className="pl-[2px]"><Pick id="mode-c01" label="Mode" value="Line" className="h-11 w-[153px]" /></td>
                <td className="pl-[6px] whitespace-nowrap">6,000 / 20</td>
                <td className="pl-[13px]"><TableSwitch label="Output C01" /></td>
                <td className="pl-[13px]"><TableSwitch label="Show C01" /></td>
                <td className="pl-[13px]"><TableSwitch label="Air C01" /></td>
              </tr>
            </tbody>
          </table>
        </div>
        <div className="flex w-[55px] flex-col gap-[66px] pt-[63px]">
          <div className="flex flex-col gap-[2px]">
            <button type="button" aria-label="Move layer up" className={clsx(buttonFace, "h-16")}>
              <Icon><path d="M10 23l8-9 8 9" strokeWidth={6} /></Icon>
            </button>
            <button type="button" aria-label="Move layer down" className={clsx(buttonFace, "h-16")}>
              <Icon><path d="M10 13l8 9 8-9" strokeWidth={6} /></Icon>
            </button>
          </div>
          <button type="button" aria-label="Delete layer" className={clsx(buttonFace, "h-16")}><Icon size={32}><TrashCan /></Icon></button>
          <div className="flex flex-col gap-[2px]">
            <button type="button" aria-label="Copy layer" className={clsx(buttonFace, "h-16")}><Icon size={32}><PageLines /></Icon></button>
            <button type="button" aria-label="Paste layer" className={clsx(buttonFace, "h-16")}><Icon size={32}><Clipboard /></Icon></button>
          </div>
        </div>
      </div>

      <div className="mt-[13px] mr-[3px] ml-[5px] grid h-[154px] grid-cols-[1fr_134px_147px_150px] grid-rows-[44px_40px_40px] items-center gap-x-[14px] gap-y-[5px] rounded-sm border-2 border-[#dadada] bg-[#ededed] pt-[6px] pr-3 text-right">
        <span>Layer Color</span>
        <button type="button" aria-label="Layer color" className="h-11 border-2 border-black bg-[#0000ff]" />
        <label htmlFor="speed" className="whitespace-nowrap">Speed (mm/m)</label>
        <Spin id="speed" value="6000.0" align="text-right" />
        <label htmlFor="passes">Pass Count</label>
        <Spin id="passes" value="1" align="text-right" atMin />
        <label htmlFor="power" className="whitespace-nowrap">Power Max (%)</label>
        <Spin id="power" value="20.00" align="text-right" />
        <label htmlFor="interval" className="text-[#808080]">Interval (mm)</label>
        <Spin id="interval" value="0.100" align="text-right" disabled />
      </div>

      <div className="mt-[5px]">
        <DockTabs
          tabs={[
            { name: "Cuts / La...", width: "w-[162px]" },
            { name: "Shape Proper...", width: "w-[200px]" },
            { name: "Con...", width: "w-[109px]" },
            { name: "Camera Co...", width: "w-[185px]" },
            { name: "Mo...", width: "w-[99px]" },
            { name: "Ma...", width: "w-[101px]" },
          ]}
        />
      </div>
      <div className="flex h-[14px] items-center justify-center">
        <svg width="32" height="2" fill="#bdbdbd" aria-hidden="true">{[0, 6, 12, 18, 24, 30].map((x) => <rect key={x} x={x} width="2" height="2" />)}</svg>
      </div>
    </section>
  );
}

function LaserPanel() {
  return (
    <section className="flex min-h-0 flex-1 flex-col">
      <DockTitle title="Laser" />
      <div className="flex flex-1 flex-col pr-[3px] pl-[2px]">
        <p className="flex h-[42px] items-center">Disconnected</p>
        <div className="grid grid-cols-3 gap-x-[7px]">
          <button type="button" className={clsx(buttonFace, iconButton, "h-[120px]")}>
            <Icon size={32}><path d="M3 0h8.500a1 1 0 0 1 1 1v34a1 1 0 0 1-1 1H3zM22 0h9a1 1 0 0 1 1 1v34a1 1 0 0 1-1 1h-9z" fill="currentColor" stroke="none" /></Icon>
            Pause
          </button>
          <button type="button" className={clsx(buttonFace, iconButton, "h-[120px]")}>
            <Icon size={32}><rect width="36" height="36" rx="1" fill="currentColor" stroke="none" /></Icon>
            Stop
          </button>
          <button type="button" className={clsx(buttonFace, iconButton, "h-[120px]")}>
            <Icon size={32}><path d="M2 0L33 18L2 36z" fill="currentColor" stroke="none" /></Icon>
            Start
          </button>
        </div>
        <div className="mt-[2px] grid grid-cols-4 gap-x-[7px]">
          <button type="button" className={clsx(buttonFace, iconButton, "h-[120px]")}>
            <Icon size={32}><path d="M2 14V2H14M22 2H34V14M34 22V34H22M14 34H2V22" strokeWidth={4.5} /></Icon>
            Frame
          </button>
          <button type="button" className={clsx(buttonFace, iconButton, "h-[120px]")}>
            <Icon size={32}><circle cx="18" cy="18" r="16" strokeWidth={3.5} strokeDasharray="8.560 4" strokeDashoffset={4.3} /></Icon>
            Frame
          </button>
          <button type="button" className={clsx(buttonFace, "h-[120px]")}>Save GCode</button>
          <button type="button" className={clsx(buttonFace, "h-[120px]")}>Run GCode</button>
        </div>
        <div className="mt-[2px] flex items-center gap-[13px]">
          <button type="button" className={clsx(buttonFace, iconButton, "h-[47px] w-[195px]")}>
            <Icon size={32}><path d="M1 18L18 3L35 18" strokeWidth={4} /><path d="M6 16V34H30V16M7.500 12V2" strokeWidth={4} /><path d="M14 34V21h8V34" fill="currentColor" stroke="none" /></Icon>
            Home
          </button>
          <button type="button" className={clsx(buttonFace, "h-10 w-[197px]")}>Go to Origin</button>
          <label htmlFor="start-from" className="ml-auto">Start From:</label>
          <Pick id="start-from" value="Absolute Coords" className="h-11 w-[221px]" />
        </div>
        <div className="flex h-[109px] items-start">
          <Switch label="Enable Rotary" className="pt-[6px]" />
          <span className="mt-11 mr-[19px] ml-auto">Job Origin</span>
          <div className="mt-[9px] mr-1 grid h-[100px] w-[211px] grid-cols-[67px_67px_67px] content-start gap-y-[2px] rounded-sm border-2 border-[#dedede] bg-[#ececec] pt-px pl-[2px]">
            {Array.from({ length: 9 }, (_, i) => <OriginRadio key={i} name="job-origin" index={i} checked={i === 4} muted />)}
          </div>
        </div>
        <div className="grid grid-cols-[1fr_429px] items-center gap-y-px">
          <Switch label="Cut Selected Graphics" on />
          <button type="button" aria-pressed="true" className={clsx("flex h-12 items-center justify-center rounded-md border-2 border-[#ababab] bg-[#dcdcdc]", iconButton)}>
            <Icon size={32}><CrossShape center="#ff0000" /></Icon>
            Show Last Position
          </button>
          <Switch label="Use Selection Origin" disabled />
          <button type="button" className={clsx(buttonFace, "h-10")}>Optimization Settings</button>
        </div>
        <div className="mt-px flex items-center">
          <button type="button" className={clsx(buttonFace, "h-10 w-40")}>Devices</button>
          <Pick id="port" label="Port" value="(Choose)" className="ml-3 h-11 flex-1" />
          <div className="relative ml-[14px] h-11 flex-1">
            <Pick id="device" label="Device" value="grbl Laser" className="h-full" pad="pl-[39px]" />
            <svg viewBox="0 0 16 24" className="pointer-events-none absolute top-[10px] left-[15px] h-5 w-4" aria-hidden="true">
              <path d="M1 1h14v3H1zM5 5h6v3l-3 4-3-4z" fill="#222" />
              <path d="M8 13v10M4 18h8M5 15l6 6M11 15l-6 6" stroke="#999" />
            </svg>
          </div>
        </div>
      </div>
      <div className="mb-[3px]">
        <DockTabs
          tabs={[
            { name: "Laser", width: "w-[106px]" },
            { name: "Material Library", width: "w-[204px]" },
            { name: "Art Library", width: "w-[154px]" },
          ]}
        />
      </div>
    </section>
  );
}

/* ---------- Palette and status ---------- */

// [name, background class, light text]
const palette: [string, string, boolean][] = [
  ["00", "bg-[#000000]", true], ["01", "bg-[#0000ff]", true], ["02", "bg-[#ff0000]", true], ["03", "bg-[#00e000]", false],
  ["04", "bg-[#d0d000]", false], ["05", "bg-[#ff8000]", false], ["06", "bg-[#00e0e0]", false], ["07", "bg-[#ff00ff]", true],
  ["08", "bg-[#b4b4b4]", false], ["09", "bg-[#0000a0]", true], ["10", "bg-[#a80000]", true], ["11", "bg-[#00a000]", true],
  ["12", "bg-[#a0a000]", false], ["13", "bg-[#c88000]", false], ["14", "bg-[#00a0ff]", true], ["15", "bg-[#a800a0]", true],
  ["16", "bg-[#808080]", true], ["17", "bg-[#7d87b9]", false], ["18", "bg-[#c37080]", false], ["19", "bg-[#4070ee]", true],
  ["20", "bg-[#e62d68]", true], ["21", "bg-[#74da84]", false], ["22", "bg-[#f8b586]", false], ["23", "bg-[#fcc0e0]", false],
  ["24", "bg-[#fc96d4]", false], ["25", "bg-[#580080]", true], ["26", "bg-[#c05400]", true], ["27", "bg-[#004754]", true],
  ["28", "bg-[#50ff78]", false], ["29", "bg-[#ffd850]", false],
];

function Swatch({ name, color, light }: { name: string; color: string; light: boolean }) {
  return (
    <button
      type="button"
      className={clsx("flex h-[50px] w-[54px] shrink-0 items-center justify-center text-[17px]", name === "01" && "rounded-md border-2 border-[#ababab] bg-[#dcdcdc]")}
    >
      <span className={clsx("flex size-9 items-center justify-center", color, light ? "text-white" : "text-black")}>{name}</span>
    </button>
  );
}

export default function App() {
  return (
    <div className="h-screen bg-linear-to-b from-[#d8d8d8] to-[#111111] font-['Inter',sans-serif] text-[20px] leading-6 text-black">
      <div className="flex h-full flex-col overflow-hidden rounded-[20px] bg-[#f0f0f0]">
        <header className="relative flex h-[57px] shrink-0 items-center border-b border-[#d0d0d0] bg-[#e8eae9] px-4">
          <div className="flex gap-4">
            {["Close", "Minimize", "Zoom"].map((name) => (
              <button key={name} type="button" aria-label={name} className="size-6 rounded-full border border-[#b8b9b8] bg-[#d0d1d0]" />
            ))}
          </div>
          <h1 className="absolute inset-x-0 text-center text-[26px] font-bold text-[#a9aaa9]">&lt;untitled&gt; - grbl Laser - LightBurn Pro 2.0.04</h1>
        </header>

        <div className="flex h-16 shrink-0 items-center border-b-2 border-[#b8b8b8] bg-linear-to-b from-[#fafafa] to-[#eeeeee]">
          <div className="flex w-[25px] shrink-0 justify-center pl-1"><Grip /></div>
          <ToolRow items={fileTools} />
          <div className="ml-[17px] flex w-[15px] shrink-0"><Grip /></div>
          <ToolRow items={arrangeTools} />
        </div>

        <PropertyBar />

        <main className="flex min-h-0 flex-1">
          <aside className="flex w-[167px] shrink-0 flex-col items-center border-r-2 border-[#b8b8b8] bg-linear-to-r from-[#fafafa] to-[#eeeeee] pl-[2px]">
            <div className="flex h-[26px] shrink-0 items-center pl-1"><Grip horizontal /></div>
            <ToolColumn items={drawTools} />
            <div className="flex h-8 shrink-0 items-center pt-3 pl-1"><Grip horizontal /></div>
            <ToolColumn items={offsetTools} />
            <label htmlFor="radius" className="mt-[2px] text-[#808080]">Radius:</label>
            <Spin id="radius" value="5.0" align="text-center" disabled className="mt-1 w-[152px] shrink-0" />
          </aside>
          <Workspace />
          <div className="flex w-[852px] shrink-0 flex-col pt-px">
            <CutsPanel />
            <LaserPanel />
          </div>
        </main>

        <div className="flex h-[63px] shrink-0 items-center border-b-2 border-[#b8b8b8] bg-linear-to-b from-[#fafafa] to-[#eeeeee] pt-[2px]">
          <div className="flex w-[25px] shrink-0 justify-center pl-1"><Grip /></div>
          {palette.map(([name, color, light]) => <Swatch key={name} name={name} color={color} light={light} />)}
          <Separator />
          <Swatch name="T1" color="bg-[#ff6000]" light={false} />
          <Swatch name="T2" color="bg-[#0098e0]" light />
        </div>

        <footer className="flex h-[47px] shrink-0 items-center gap-7 pt-1 pl-1 text-[21px]">
          <Switch label="Move" on />
          <Switch label="Size" on />
          <Switch label="Rotate" on />
          <Switch label="Shear" on />
          <span className="ml-4">x: 174.20, y: 140.57 mm</span>
          <span className="-ml-1">Min (96.7x, 129.9y) to Max (179.0x, 141.5y)&nbsp; 1 objects</span>
        </footer>
      </div>
    </div>
  );
}
